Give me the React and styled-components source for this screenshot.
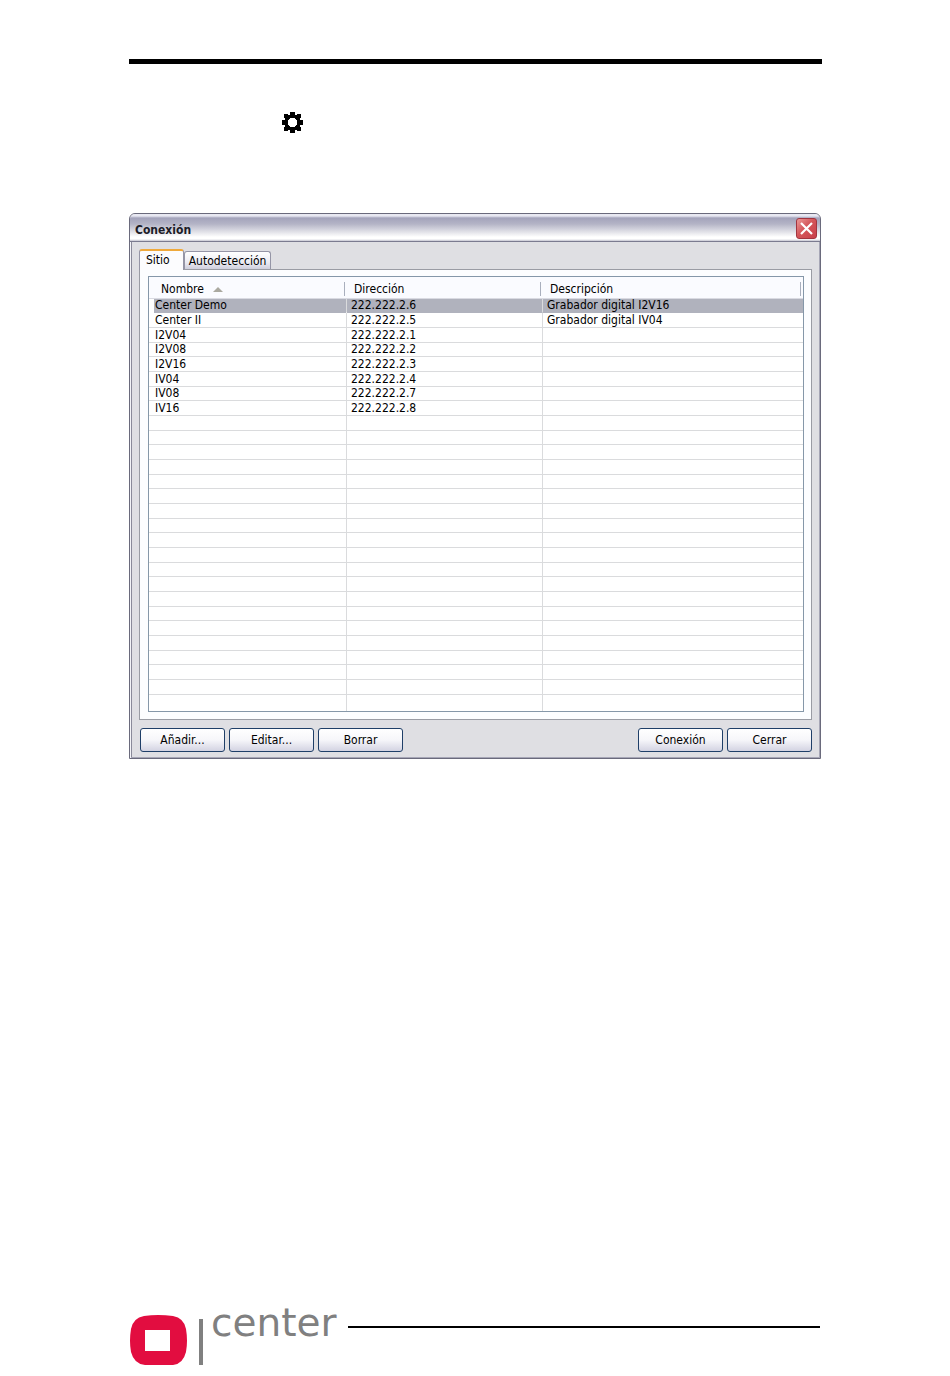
import React, { useState } from "react";
import styled, { createGlobalStyle } from "styled-components";

const GlobalStyle = createGlobalStyle`
  * {
    box-sizing: border-box;
  }

  body {
    margin: 0;
    background: #fff;
    color: #000;
    font-family: "DejaVu Sans Condensed", "DejaVu Sans", sans-serif;
    font-size: 12px;
    line-height: 13px;
  }

  button {
    font: inherit;
    color: inherit;
    margin: 0;
  }
`;

const Page = styled.main`
  display: flex;
  flex-direction: column;
  min-height: 100vh;
  padding: 59px 128px 10px 129px;
`;

const TopRule = styled.hr`
  width: 100%;
  height: 5px;
  margin: 0;
  border: 0;
  background: #000;
`;

const IconLine = styled.div`
  display: flex;
  padding: 48px 0 80px 153px;

  svg {
    display: block;
  }
`;

const Dialog = styled.section`
  margin-right: 1px;
  border: 1px solid #6a6a7c;
  border-radius: 6px 6px 0 0;
  background: #dfdfe3;
  box-shadow: inset 1px 0 #f4f4f8, inset -1px -1px #a6a6b6,
    inset 2px 0 #8a8a9a;
`;

const TitleBar = styled.header`
  display: flex;
  align-items: center;
  justify-content: space-between;
  height: 28px;
  padding: 2px 3px 0 5px;
  border-bottom: 1px solid #7b7b90;
  border-radius: 5px 5px 0 0;
  background: linear-gradient(
    #e8e8f2 0,
    #e8e8f2 2px,
    #a3a3bb 4px,
    #b4b4c6 10px,
    #dcdce4 17px,
    #fff 23px,
    #fff 25px,
    #c4c4d0 27px
  );
`;

const Title = styled.h1`
  margin: 0;
  color: #1c1c28;
  font-size: 12px;
  font-weight: bold;
  padding-top: 3px;
`;

const CloseButton = styled.button`
  display: flex;
  align-items: center;
  justify-content: center;
  width: 21px;
  height: 21px;
  padding: 0;
  border: 1px solid #a2343f;
  border-radius: 3px;
  background: linear-gradient(135deg, #eb9a98, #d4565a 45%, #c9404a);
`;

const Body = styled.div`
  padding: 7px 8px 6px 9px;
`;

const TabList = styled.div`
  display: flex;
  align-items: flex-end;
  height: 20px;
`;

const Tab = styled.button`
  position: relative;
  z-index: ${(props) => (props.$active ? 1 : 0)};
  height: ${(props) => (props.$active ? "21px" : "18px")};
  margin-bottom: ${(props) => (props.$active ? "-1px" : "0")};
  padding: ${(props) => (props.$active ? "0 13px 1px 6px" : "1px 4px 0")};
  border: 1px solid #9595a6;
  border-bottom: 0;
  border-radius: 3px 3px 0 0;
  background: ${(props) =>
    props.$active ? "#fcfcfe" : "linear-gradient(#fff, #ececf3 60%, #cfcfdd)"};
  ${(props) => props.$active && "border-top: 2px solid #efa93c;"}
`;

const Panel = styled.div`
  padding: 6px 7px 7px 8px;
  border: 1px solid #9a9ca4;
  background: #fcfdff;
`;

const TableFrame = styled.div`
  border: 1px solid #8597a9;
  background: #fff;
`;

const SiteTable = styled.table`
  width: 100%;
  table-layout: fixed;
  border-collapse: separate;
  border-spacing: 0;
`;

const HeadCell = styled.th`
  height: 22px;
  padding: 4px 2px 2px 0;
  background: #fafbff;
  border-bottom: 1px solid #d9dae2;
  font-weight: normal;
  text-align: left;
`;

const HeadLabel = styled.div`
  display: flex;
  align-items: center;
  gap: 9px;
  height: 14px;
  padding: 2px 0 0 7px;
  border-right: 1px solid #a9afbd;

  ${HeadCell}:first-child & {
    padding-left: 12px;
  }
`;

const SortArrow = styled.span`
  border: 5px solid transparent;
  border-top: 0;
  border-bottom-color: #aaa9a0;
`;

const Row = styled.tr`
  height: 15px;

  &:nth-child(3n + 1) {
    height: 14px;
  }

  &:last-child {
    height: 16px;
  }
`;

const Cell = styled.td`
  padding: 0 0 0 4px;
  border-right: 1px solid #dadbdd;
  border-bottom: 1px solid ${(props) => (props.$selected ? "#b0b2bd" : "#dadbdd")};
  background: ${(props) => (props.$selected ? "#b0b2bd" : "#fff")};
  white-space: nowrap;

  &:first-child {
    padding-left: 6px;
    ${(props) =>
      props.$selected &&
      `
      border-bottom-color: transparent;
      background: linear-gradient(to right, #fff 5px, #b0b2bd 5px);
    `}
  }

  &:last-child {
    border-right: 0;
  }

  ${Row}:last-child & {
    border-bottom: 0;
  }
`;

const Actions = styled.div`
  display: flex;
  gap: 4px;
  padding: 8px 0 0 1px;
`;

const ActionButton = styled.button`
  width: 85px;
  height: 24px;
  padding: 1px 0 0;
  border: 1px solid #1f3f68;
  border-radius: 3px;
  background: linear-gradient(#fff, #f6f6fa 50%, #d3d3e2);
  ${(props) => props.$pushRight && "margin-left: auto;"}
`;

const Footer = styled.footer`
  display: flex;
  align-items: flex-start;
  margin-top: auto;
`;

const Divider = styled.span`
  width: 4px;
  height: 46px;
  margin: 4px 8px 0 12px;
  background: #808080;
`;

const Brand = styled.span`
  width: 128px;
  color: #808080;
  font-family: "DejaVu Sans", sans-serif;
  font-size: 39px;
  line-height: 16px;
`;

const FooterRule = styled.hr`
  flex: 1;
  height: 2px;
  margin: 11px 2px 0 9px;
  border: 0;
  background: #000;
`;

const sites = [
  ["Center Demo", "222.222.2.6", "Grabador digital I2V16"],
  ["Center II", "222.222.2.5", "Grabador digital IV04"],
  ["I2V04", "222.222.2.1", ""],
  ["I2V08", "222.222.2.2", ""],
  ["I2V16", "222.222.2.3", ""],
  ["IV04", "222.222.2.4", ""],
  ["IV08", "222.222.2.7", ""],
  ["IV16", "222.222.2.8", ""],
];

// the list always shows 28 lines, the unused ones stay empty
const rows = Array.from({ length: 28 }, (_, i) => sites[i] || ["", "", ""]);

function GearIcon() {
  return (
    <svg width="21" height="21" viewBox="0 0 21 21" aria-hidden="true">
      <path
        fillRule="evenodd"
        d="M8 0h5v3h2V2h4v4h-1v2h3v5h-3v2h1v4h-4v-1h-2v3H8v-3H6v1H2v-4h1v-2H0V8h3V6H2V2h4v1h2zM8 6v1H7v1H6v5h1v1h1v1h5v-1h1v-1h1V8h-1V7h-1V6z"
      />
    </svg>
  );
}

function CloseIcon() {
  return (
    <svg width="13" height="13" viewBox="0 0 13 13" aria-hidden="true">
      <path d="M1 1l11 11M12 1L1 12" stroke="#fff" strokeWidth="2.2" />
    </svg>
  );
}

function LogoMark() {
  return (
    <svg width="58" height="51" viewBox="0 0 58 51" aria-hidden="true">
      <path
        fill="#e20d40"
        fillRule="evenodd"
        d="M15 1Q29-1 44 1Q55 3 57 14Q59 26 57 37Q54 49 44 50H16Q5 49 2 37Q0 26 2 14Q4 3 15 1zM16 15v21h25V15z"
      />
    </svg>
  );
}

function ConnectionDialog() {
  const [tab, setTab] = useState("Sitio");
  const [selected, setSelected] = useState(0);

  return (
    <Dialog aria-labelledby="dialog-title">
      <TitleBar>
        <Title id="dialog-title">Conexión</Title>
        <CloseButton type="button" aria-label="Cerrar ventana">
          <CloseIcon />
        </CloseButton>
      </TitleBar>
      <Body>
        <TabList role="tablist">
          {["Sitio", "Autodetección"].map((name) => (
            <Tab
              key={name}
              type="button"
              role="tab"
              aria-selected={tab === name}
              $active={tab === name}
              onClick={() => setTab(name)}
            >
              {name}
            </Tab>
          ))}
        </TabList>
        <Panel role="tabpanel">
          <TableFrame>
            <SiteTable>
              <colgroup>
                <col style={{ width: "198px" }} />
                <col style={{ width: "196px" }} />
                <col />
              </colgroup>
              <thead>
                <tr>
                  <HeadCell aria-sort="ascending">
                    <HeadLabel>
                      Nombre
                      <SortArrow />
                    </HeadLabel>
                  </HeadCell>
                  <HeadCell>
                    <HeadLabel>Dirección</HeadLabel>
                  </HeadCell>
                  <HeadCell>
                    <HeadLabel>Descripción</HeadLabel>
                  </HeadCell>
                </tr>
              </thead>
              <tbody>
                {rows.map((row, i) => (
                  <Row key={i} onClick={() => row[0] && setSelected(i)}>
                    {row.map((text, j) => (
                      <Cell key={j} $selected={i === selected}>
                        {text}
                      </Cell>
                    ))}
                  </Row>
                ))}
              </tbody>
            </SiteTable>
          </TableFrame>
        </Panel>
        <Actions>
          <ActionButton type="button">Añadir...</ActionButton>
          <ActionButton type="button">Editar...</ActionButton>
          <ActionButton type="button">Borrar</ActionButton>
          <ActionButton type="button" $pushRight>
            Conexión
          </ActionButton>
          <ActionButton type="button">Cerrar</ActionButton>
        </Actions>
      </Body>
    </Dialog>
  );
}

function App() {
  return (
    <>
      <GlobalStyle />
      <Page>
        <TopRule />
        <IconLine>
          <GearIcon />
        </IconLine>
        <ConnectionDialog />
        <Footer>
          <LogoMark />
          <Divider />
          <Brand>center</Brand>
          <FooterRule />
        </Footer>
      </Page>
    </>
  );
}

export default App;
